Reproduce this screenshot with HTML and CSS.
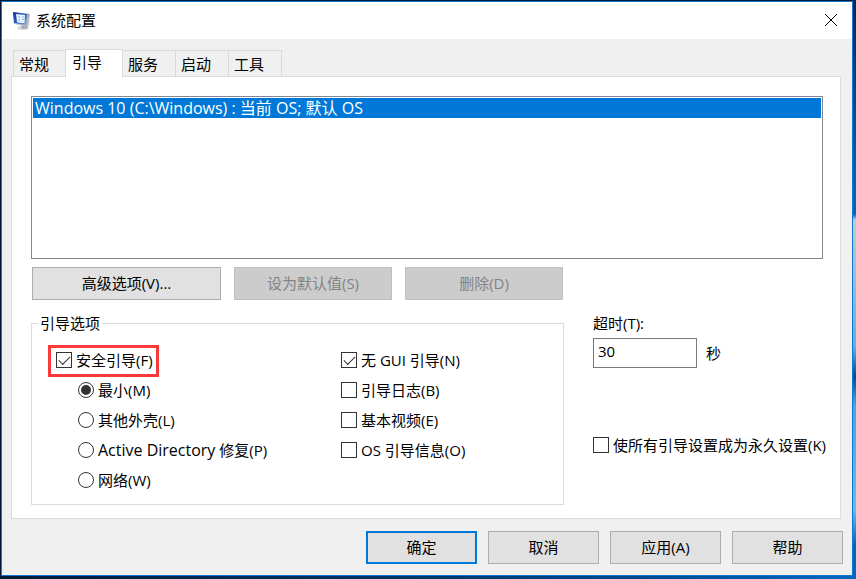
FILE: index.html
```html
<!DOCTYPE html>
<html lang="zh">
<head>
    <meta charset="UTF-8">
    <meta name="viewport" content="width=device-width, initial-scale=1.0">
    <title>系统配置</title>
    <link rel="stylesheet" href="styles.css">
</head>
<body>
    <div class="dialog">
        <header class="titlebar">
            <svg class="app-icon" viewBox="0 0 20 20" aria-hidden="true">
                <defs>
                    <linearGradient id="screen" x1="0" y1="0" x2="1" y2="1">
                        <stop offset="0" stop-color="#14249a"/>
                        <stop offset=".6" stop-color="#3567c8"/>
                        <stop offset="1" stop-color="#8fb4ea"/>
                    </linearGradient>
                    <linearGradient id="frame" x1="0" y1="0" x2="1" y2="0">
                        <stop offset="0" stop-color="#d9dde6"/>
                        <stop offset="1" stop-color="#a6abb3"/>
                    </linearGradient>
                </defs>
                <ellipse cx="11" cy="18" rx="6" ry="2" fill="#d5d8dc"/>
                <path d="M9 14l6 1 1 3-6 1z" fill="#a4a9b0"/>
                <path d="M15 3l3 1-1 11-2 2-2-1z" fill="#c3c7cd"/>
                <path d="M1 2l16 2-2 13-13-3z" fill="url(#frame)"/>
                <path d="M1 2l14 2-1 11-12-2z" fill="url(#screen)"/>
                <path d="M4 4l5 .5v8.500l-4-.7zM9 4.500l4 .6-.5 8-3.500-.1z" fill="#e6f2fc"/>
                <path d="M6 6.500l.8 1 1.200-1.500M6 9.500l.8 1L8 9M10 7h2M10 9.500h2" fill="none" stroke="#67a9d8" stroke-width=".8"/>
            </svg>
            <h1 class="title">系统配置</h1>
            <button class="close" type="button" aria-label="关闭">
                <svg viewBox="0 0 12 12" aria-hidden="true"><path d="M0 0L12 12M12 0L0 12"/></svg>
            </button>
        </header>

        <main class="content">
            <div class="tabs" role="tablist">
                <button class="tab" type="button" role="tab">常规</button>
                <button class="tab active" type="button" role="tab" aria-selected="true">引导</button>
                <button class="tab" type="button" role="tab">服务</button>
                <button class="tab" type="button" role="tab">启动</button>
                <button class="tab" type="button" role="tab">工具</button>
            </div>

            <section class="panel">
                <select class="os-list" size="8" aria-label="操作系统">
                    <option selected>Windows 10 (C:\Windows) : 当前 OS; 默认 OS</option>
                </select>

                <div class="actions">
                    <button class="btn wide" type="button">高级选项(V)...</button>
                    <button class="btn" type="button" disabled>设为默认值(S)</button>
                    <button class="btn" type="button" disabled>删除(D)</button>
                </div>

                <div class="settings">
                    <fieldset class="options">
                        <legend>引导选项</legend>
                        <div class="option-cols">
                            <div class="col">
                                <label class="choice marked"><input type="checkbox" checked>安全引导(F)</label>
                                <label class="choice sub"><input type="radio" name="safe" checked>最小(M)</label>
                                <label class="choice sub"><input type="radio" name="safe">其他外壳(L)</label>
                                <label class="choice sub"><input type="radio" name="safe"><span><span class="latin">Active Directory</span> 修复(P)</span></label>
                                <label class="choice sub"><input type="radio" name="safe">网络(W)</label>
                            </div>
                            <div class="col">
                                <label class="choice"><input type="checkbox" checked>无 GUI 引导(N)</label>
                                <label class="choice"><input type="checkbox">引导日志(B)</label>
                                <label class="choice"><input type="checkbox">基本视频(E)</label>
                                <label class="choice"><input type="checkbox">OS 引导信息(O)</label>
                            </div>
                        </div>
                    </fieldset>

                    <div class="side">
                        <label for="timeout">超时(T):</label>
                        <div class="timeout-row">
                            <input class="timeout" id="timeout" type="text" value="30">
                            <span>秒</span>
                        </div>
                        <label class="choice permanent"><input type="checkbox">使所有引导设置成为永久设置(K)</label>
                    </div>
                </div>
            </section>
        </main>

        <footer class="footer">
            <button class="btn default" type="button">确定</button>
            <button class="btn" type="button">取消</button>
            <button class="btn" type="button">应用(A)</button>
            <button class="btn" type="button">帮助</button>
        </footer>
    </div>
</body>
</html>
```

FILE: styles.css
```css
* {
    box-sizing: border-box;
}

body {
    margin: 0;
    padding: 1px 3px 3px 1px;
    min-height: 100vh;
    display: flex;
    /* desktop wallpaper behind the dialog */
    background:
        linear-gradient(#00284f 0%, #0062b5 30%, #0066bb 37%, #b5d0dc 38%, #58b4dc 60%, #004a97 65%, #3fa9e0 70%, #5cc0ea 88%, #0068c0 94%) right / 3px 100% no-repeat,
        linear-gradient(90deg, #001a38 0%, #003263 45%, #004a8c 75%, #0068c0 100%) bottom / 100% 3px no-repeat,
        #001a38;
    color: #000;
}

body, button, input, select {
    font-family: "Open Sans", "Noto Sans CJK SC", sans-serif;
    font-size: 15px;
    line-height: 20px;
}

.dialog {
    flex: 1;
    display: flex;
    flex-direction: column;
    border: 1px solid #1177d1;
    background-color: #f0f0f0;
}

/* title bar */
.titlebar {
    display: flex;
    align-items: center;
    height: 37px;
    padding: 0 15px 2px 10px;
    background-color: #fff;
}

.app-icon {
    width: 20px;
    height: 20px;
}

.title {
    margin: 0 auto 0 4px;
    font-size: 15px;
    font-weight: normal;
}

.close {
    display: flex;
    padding: 0;
    border: 0;
    background: none;
}

.close svg {
    width: 12px;
    height: 12px;
    overflow: visible;
    fill: none;
    stroke: #000;
}

/* tabs */
.content {
    flex: 1;
    display: flex;
    flex-direction: column;
    padding: 10px 11px 0 9px;
}

.tabs {
    display: flex;
    align-items: flex-end;
    padding-left: 2px;
}

.tab {
    width: 53px;
    height: 26px;
    padding: 0 5px;
    border: 1px solid #d9d9d9;
    border-width: 1px 1px 0 0;
    background-color: #f0f0f0;
    color: #000;
    text-align: left;
}

.tab:first-child {
    border-left-width: 1px;
}

.tab.active {
    width: 58px;
    height: 28px;
    margin: 0 0 -1px -1px;
    padding: 0 6px 4px;
    border-left-width: 1px;
    background-color: #fff;
    z-index: 1;
}

.panel {
    flex: 1;
    display: flex;
    flex-direction: column;
    padding: 19px 0 13px 19px;
    border: 1px solid #dcdcdc;
    background-color: #fff;
}

.os-list {
    height: 163px;
    margin-right: 17px;
    padding: 1px;
    border: 1px solid #828790;
    border-radius: 0;
    background-color: #fff;
    font-size: 16px;
    outline: none;
    overflow: hidden;
}

.os-list option {
    display: flex;
    align-items: center;
    height: 20px;
    min-height: 20px;
    padding: 0 2px 2px;
}

.os-list option:checked {
    background: linear-gradient(#0078d7, #0078d7);
    -webkit-text-fill-color: #fff;
}

/* buttons */
.btn {
    height: 33px;
    padding: 0 0 2px;
    border: 1px solid #adadad;
    border-radius: 0;
    background-color: #e1e1e1;
    color: #000;
}

.btn:disabled {
    border-color: #bfbfbf;
    background-color: #ccc;
    color: #838383;
}

.btn.default {
    border: 2px solid #0078d7;
}

.actions {
    display: flex;
    gap: 13px;
    margin: 8px 0 13px 1px;
}

.actions .btn {
    width: 158px;
}

.actions .wide {
    width: 189px;
}

/* boot options */
.settings {
    flex: 1;
    display: grid;
    grid-template-columns: 1fr 247px;
    gap: 29px;
}

.options {
    min-width: 0;
    margin: 0;
    padding: 12px 0 8px 16px;
    border: 1px solid #dcdcdc;
}

.options legend {
    margin-left: -10px;
    padding: 0 2px;
}

.option-cols {
    display: grid;
    grid-template-columns: 293px 1fr;
}

.col {
    display: flex;
    flex-direction: column;
    align-items: flex-start;
}

.choice {
    display: flex;
    align-items: center;
    gap: 4px;
    height: 30px;
    white-space: nowrap;
}

.choice.sub {
    margin-left: 30px;
}

.choice.marked {
    height: 32px;
    margin-bottom: -2px;
    padding: 0 3px 2px 5px;
    border: 3px solid #fa3a3a;
}

.latin {
    font-size: 16px;
}

.choice input {
    appearance: none;
    flex: none;
    width: 16px;
    height: 16px;
    margin: 0;
    border: 1px solid #333;
    background-color: #fff;
}

.choice input[type="radio"] {
    border-radius: 50%;
}

.choice input[type="radio"]:checked {
    padding: 2px;
    background-color: #333;
    background-clip: content-box;
}

.choice input[type="checkbox"]:checked {
    display: grid;
    place-items: center;
}

.choice input[type="checkbox"]:checked::before {
    content: "";
    width: 10px;
    height: 5px;
    margin-top: -3px;
    border: solid #333;
    border-width: 0 0 1px 1px;
    transform: rotate(-45deg);
}

/* timeout */
.timeout-row {
    display: flex;
    align-items: center;
    gap: 9px;
    margin-top: 5px;
}

.timeout {
    width: 104px;
    height: 30px;
    padding: 0 4px 4px;
    border: 1px solid #7a7a7a;
    border-radius: 0;
    background-color: #fff;
}

.permanent {
    margin-top: 62px;
}

.footer {
    display: flex;
    justify-content: flex-end;
    gap: 11px;
    padding: 12px 9px 11px;
}

.footer .btn {
    width: 111px;
}
```
